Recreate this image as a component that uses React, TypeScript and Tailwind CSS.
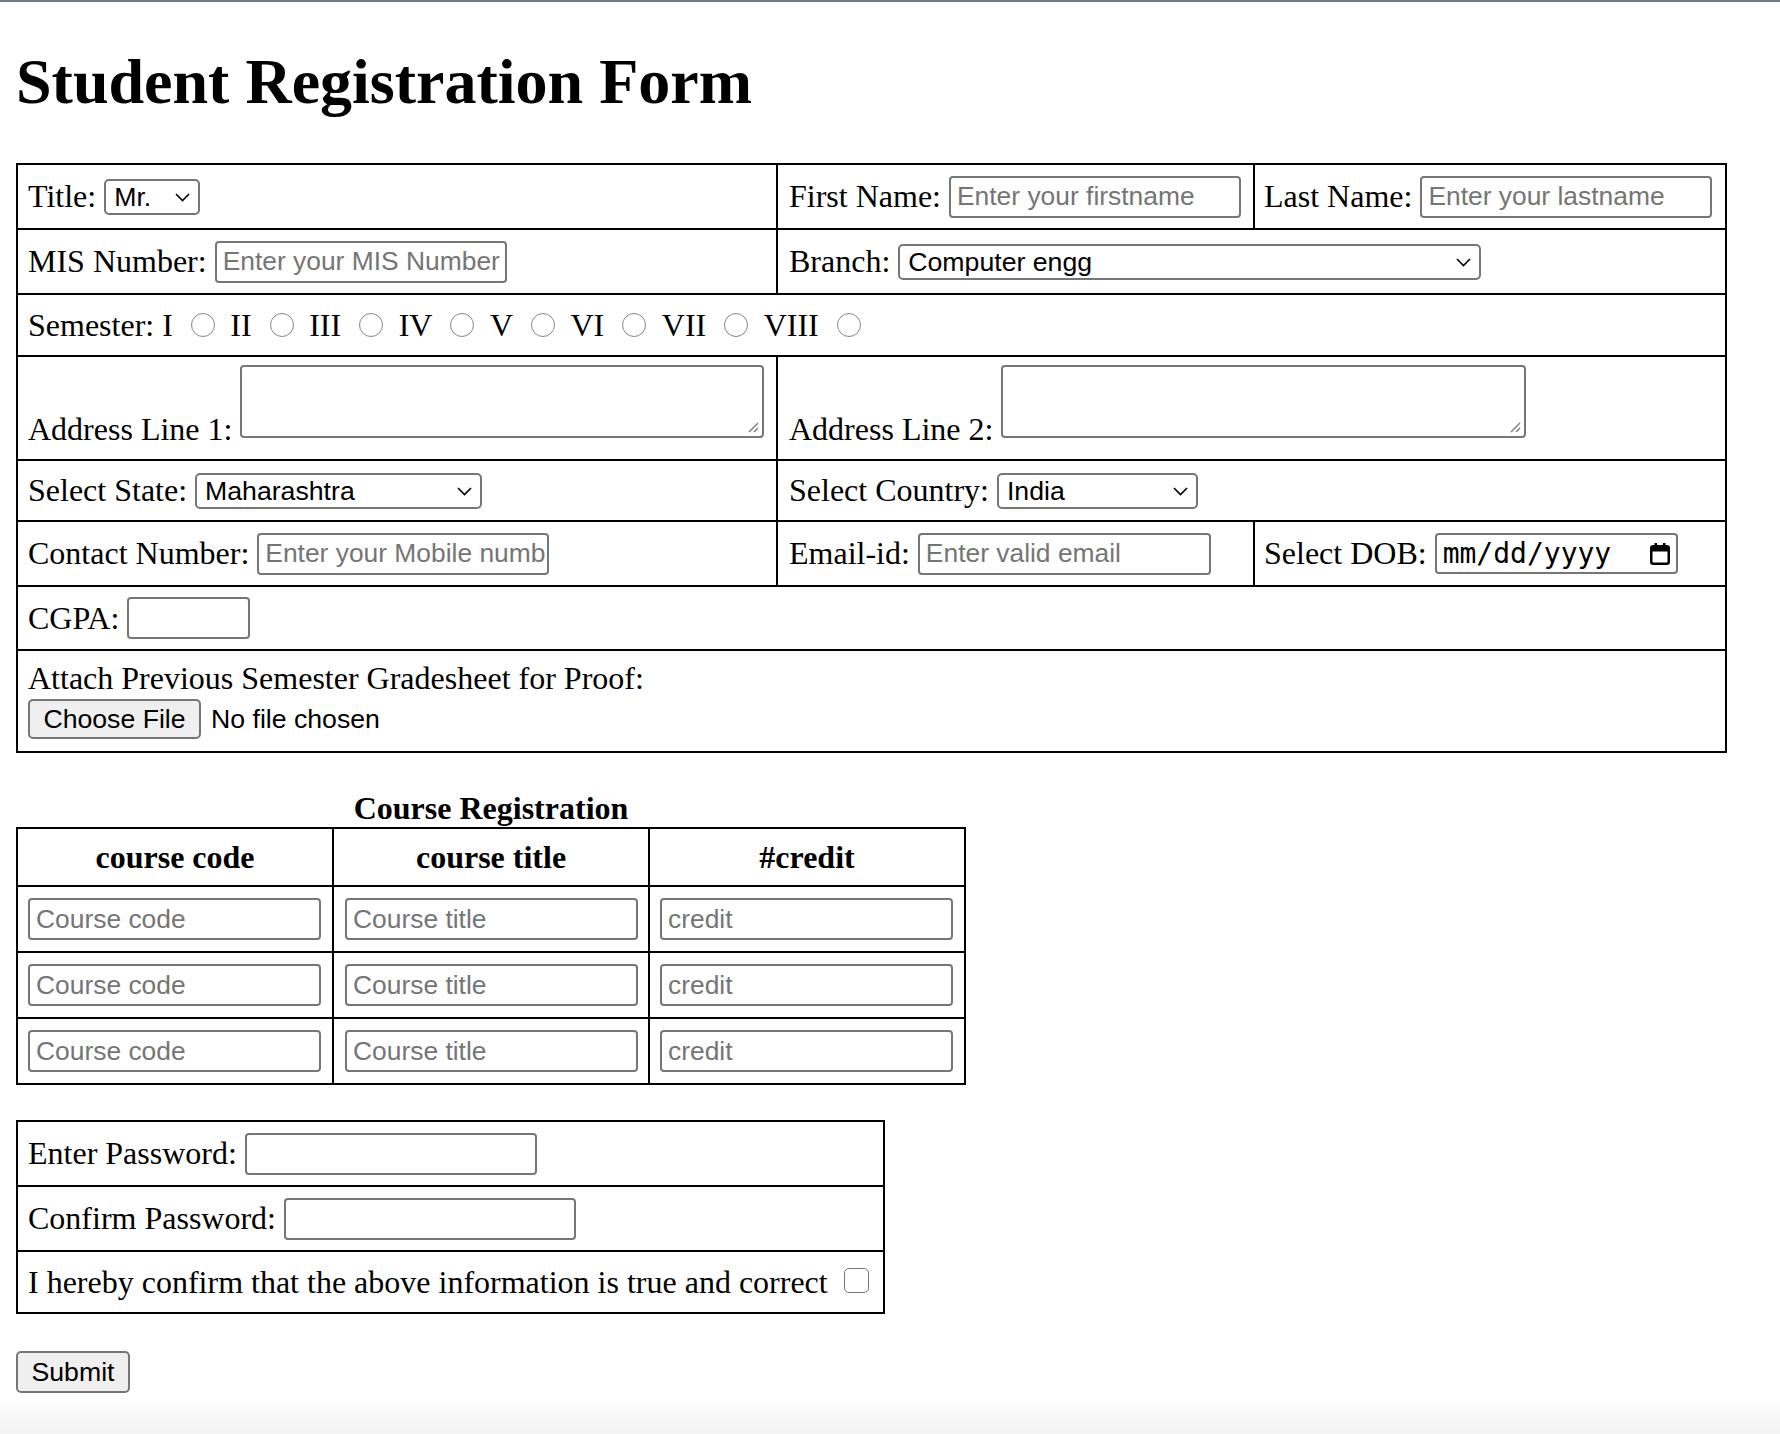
import React from "react";

const sans = "font-['Liberation_Sans',Arial,sans-serif] text-[26.67px] leading-[30px]";
const field =
  "h-[42px] rounded-[4px] border-2 border-[#767676] bg-white pl-[6px] pr-[2px] text-black outline-none placeholder:text-[#757575] font-['Liberation_Sans',Arial,sans-serif] text-[26.4px] leading-[32px]";
const line = "leading-[37px] whitespace-nowrap";

const Select = ({ value, options = [], className = "" }: { value: string; options?: string[]; className?: string }) => (
  <div className={"relative h-[36px] " + className}>
    <select
      defaultValue={value}
      className="block h-full w-full appearance-none rounded-[5px] border-2 border-[#767676] bg-white py-0 pl-[8px] pr-[32px] text-black outline-none font-['Liberation_Sans',Arial,sans-serif] text-[26.67px] leading-[30px]"
    >
      {[value, ...options].map(o => (
        <option key={o}>{o}</option>
      ))}
    </select>
    <svg className="pointer-events-none absolute right-[10px] top-[14px]" width="15" height="9" viewBox="0 0 15 9">
      <path d="M1 1l6.5 6.5L14 1" fill="none" stroke="#000" strokeWidth="1.6" />
    </svg>
  </div>
);

const TextArea = ({ width }: { width: string }) => (
  <div className={"relative mb-[10px] h-[73px] " + width}>
    <textarea className="block h-full w-full resize-none rounded-[4px] border-2 border-[#767676] bg-white outline-none" />
    {/* resize grip */}
    <svg className="pointer-events-none absolute bottom-[5px] right-[5px]" width="12" height="12" viewBox="0 0 12 12">
      <path d="M11 2L2 11M11 7L7 11" stroke="#7a7a7a" strokeWidth="1.4" />
    </svg>
  </div>
);

const Radio = () => (
  <input
    type="radio"
    name="semester"
    className="ml-[18px] mr-[15.5px] h-[24px] w-[24px] shrink-0 appearance-none rounded-full border-[1.5px] border-[#858585] bg-white"
  />
);

const semesters = ["I", "II", "III", "IV", "V", "VI", "VII", "VIII"];

const App = () => {
  return (
    <div className="flex h-[1434px] flex-col overflow-hidden bg-white text-[32px] text-black font-['Liberation_Serif','Times_New_Roman',serif]">
      <div className="h-[2px] bg-[#737b82]" />

      <h1 className="ml-[16px] mb-[44px] mt-[43px] text-[64px] font-bold leading-[74px]">Student Registration Form</h1>

      {/* personal details */}
      <div className="ml-[16px] w-[1711px] border-2 border-black">
        <div className="flex h-[63px]">
          <div className="flex w-[758px] items-center gap-[8px] pl-[10px]">
            <span className={line}>Title:</span>
            <Select value="Mr." options={["Ms.", "Mrs."]} className="w-[96px]" />
          </div>
          <div className="flex w-[477px] items-center gap-[8px] border-l-2 border-black pl-[11px]">
            <span className={line}>First Name:</span>
            <input className={field + " w-[292px]"} placeholder="Enter your firstname" />
          </div>
          <div className="flex flex-1 items-center gap-[8px] border-l-2 border-black pl-[9px]">
            <span className={line}>Last Name:</span>
            <input className={field + " w-[292px]"} placeholder="Enter your lastname" />
          </div>
        </div>

        <div className="flex h-[65px] border-t-2 border-black">
          <div className="flex w-[758px] items-center gap-[8px] pl-[10px]">
            <span className={line}>MIS Number:</span>
            <input className={field + " w-[292px]"} placeholder="Enter your MIS Number" />
          </div>
          <div className="flex flex-1 items-center gap-[8px] border-l-2 border-black pl-[11px]">
            <span className={line}>Branch:</span>
            <Select value="Computer engg" options={["IT", "Mechanical engg", "Civil engg"]} className="w-[583px]" />
          </div>
        </div>

        <div className="flex h-[62px] items-center border-t-2 border-black pl-[10px]">
          <span className={line + " mr-[8px]"}>Semester:</span>
          {semesters.map(s => (
            <React.Fragment key={s}>
              <span className={line}>{s}</span>
              <Radio />
            </React.Fragment>
          ))}
        </div>

        <div className="flex h-[104px] border-t-2 border-black">
          <div className="flex w-[758px] items-end gap-[8px] pb-[11px] pl-[10px]">
            <span className={line}>Address Line 1:</span>
            <TextArea width="w-[524px]" />
          </div>
          <div className="flex flex-1 items-end gap-[8px] border-l-2 border-black pb-[11px] pl-[11px]">
            <span className={line}>Address Line 2:</span>
            <TextArea width="w-[525px]" />
          </div>
        </div>

        <div className="flex h-[61px] border-t-2 border-black">
          <div className="flex w-[758px] items-center gap-[8px] pl-[10px]">
            <span className={line}>Select State:</span>
            <Select value="Maharashtra" options={["Goa", "Gujarat", "Karnataka"]} className="w-[287px]" />
          </div>
          <div className="flex flex-1 items-center gap-[8px] border-l-2 border-black pl-[11px]">
            <span className={line}>Select Country:</span>
            <Select value="India" options={["Nepal", "Sri Lanka"]} className="w-[201px]" />
          </div>
        </div>

        <div className="flex h-[65px] border-t-2 border-black">
          <div className="flex w-[758px] items-center gap-[8px] pl-[10px]">
            <span className={line}>Contact Number:</span>
            <input className={field + " w-[292px]"} placeholder="Enter your Mobile number" />
          </div>
          <div className="flex w-[477px] items-center gap-[8px] border-l-2 border-black pl-[11px]">
            <span className={line}>Email-id:</span>
            <input className={field + " w-[293px]"} placeholder="Enter valid email" />
          </div>
          <div className="flex flex-1 items-center gap-[8px] border-l-2 border-black pl-[9px]">
            <span className={line}>Select DOB:</span>
            <div className="flex h-[41px] w-[243px] items-center justify-between rounded-[4px] border-2 border-[#767676] pl-[6px] pr-[6px]">
              <span className="text-[28px] leading-none font-['DejaVu_Sans_Mono',monospace]">mm/dd/yyyy</span>
              <svg width="20" height="22" viewBox="0 0 20 22">
                <rect x="1.25" y="3.25" width="17.5" height="17.5" rx="2" fill="none" stroke="#000" strokeWidth="2.5" />
                <rect x="1" y="3" width="18" height="5.5" fill="#000" />
                <rect x="4.5" y="0" width="2.6" height="5" fill="#000" />
                <rect x="12.9" y="0" width="2.6" height="5" fill="#000" />
              </svg>
            </div>
          </div>
        </div>

        <div className="flex h-[64px] items-center gap-[8px] border-t-2 border-black pl-[10px]">
          <span className={line}>CGPA:</span>
          <input className={field + " w-[123px]"} />
        </div>

        <div className="h-[102px] border-t-2 border-black pl-[10px] pt-[9px]">
          <div className={line}>Attach Previous Semester Gradesheet for Proof:</div>
          <div className="mt-[2px] flex items-center gap-[10px]">
            <button type="button" className={"h-[40px] w-[173px] rounded-[5px] border-2 border-[#767676] bg-[#efefef] text-black " + sans}>
              Choose File
            </button>
            <span className={sans}>No file chosen</span>
          </div>
        </div>
      </div>

      {/* course registration */}
      <div className="ml-[16px] mt-[37px] w-[950px] text-center font-bold leading-[37px]">Course Registration</div>
      <div className="ml-[16px] w-[950px] border-2 border-black">
        <div className="flex h-[56px] font-bold">
          <div className="flex w-[314px] items-center justify-center">course code</div>
          <div className="flex w-[316px] items-center justify-center border-l-2 border-black">course title</div>
          <div className="flex flex-1 items-center justify-center border-l-2 border-black">#credit</div>
        </div>
        {[0, 1, 2].map(i => (
          <div key={i} className="flex h-[66px] border-t-2 border-black">
            <div className="flex w-[314px] items-center pl-[10px]">
              <input className={field + " w-[293px]"} placeholder="Course code" />
            </div>
            <div className="flex w-[316px] items-center border-l-2 border-black pl-[11px]">
              <input className={field + " w-[293px]"} placeholder="Course title" />
            </div>
            <div className="flex flex-1 items-center border-l-2 border-black pl-[10px]">
              <input className={field + " w-[293px]"} placeholder="credit" />
            </div>
          </div>
        ))}
      </div>

      {/* password + confirmation */}
      <div className="ml-[16px] mt-[35px] w-[869px] border-2 border-black">
        <div className="flex h-[63px] items-center gap-[8px] pl-[10px]">
          <span className={line}>Enter Password:</span>
          <input type="password" className={field + " w-[292px]"} />
        </div>
        <div className="flex h-[65px] items-center gap-[8px] border-t-2 border-black pl-[10px]">
          <span className={line}>Confirm Password:</span>
          <input type="password" className={field + " w-[292px]"} />
        </div>
        <div className="flex h-[62px] items-center border-t-2 border-black pl-[10px]">
          <span className={line}>I hereby confirm that the above information is true and correct</span>
          <input
            type="checkbox"
            className="mb-[4px] ml-[16px] h-[25px] w-[25px] appearance-none rounded-[5px] border-[1.5px] border-[#767676] bg-white"
          />
        </div>
      </div>

      <button
        type="submit"
        className={"ml-[16px] mt-[37px] h-[42px] w-[114px] self-start rounded-[5px] border-2 border-[#767676] bg-[#efefef] text-black " + sans}
      >
        Submit
      </button>

      <div className="mt-auto h-[38px] bg-linear-to-b from-white to-[#f3f3f3]" />
    </div>
  );
};

export default App;
